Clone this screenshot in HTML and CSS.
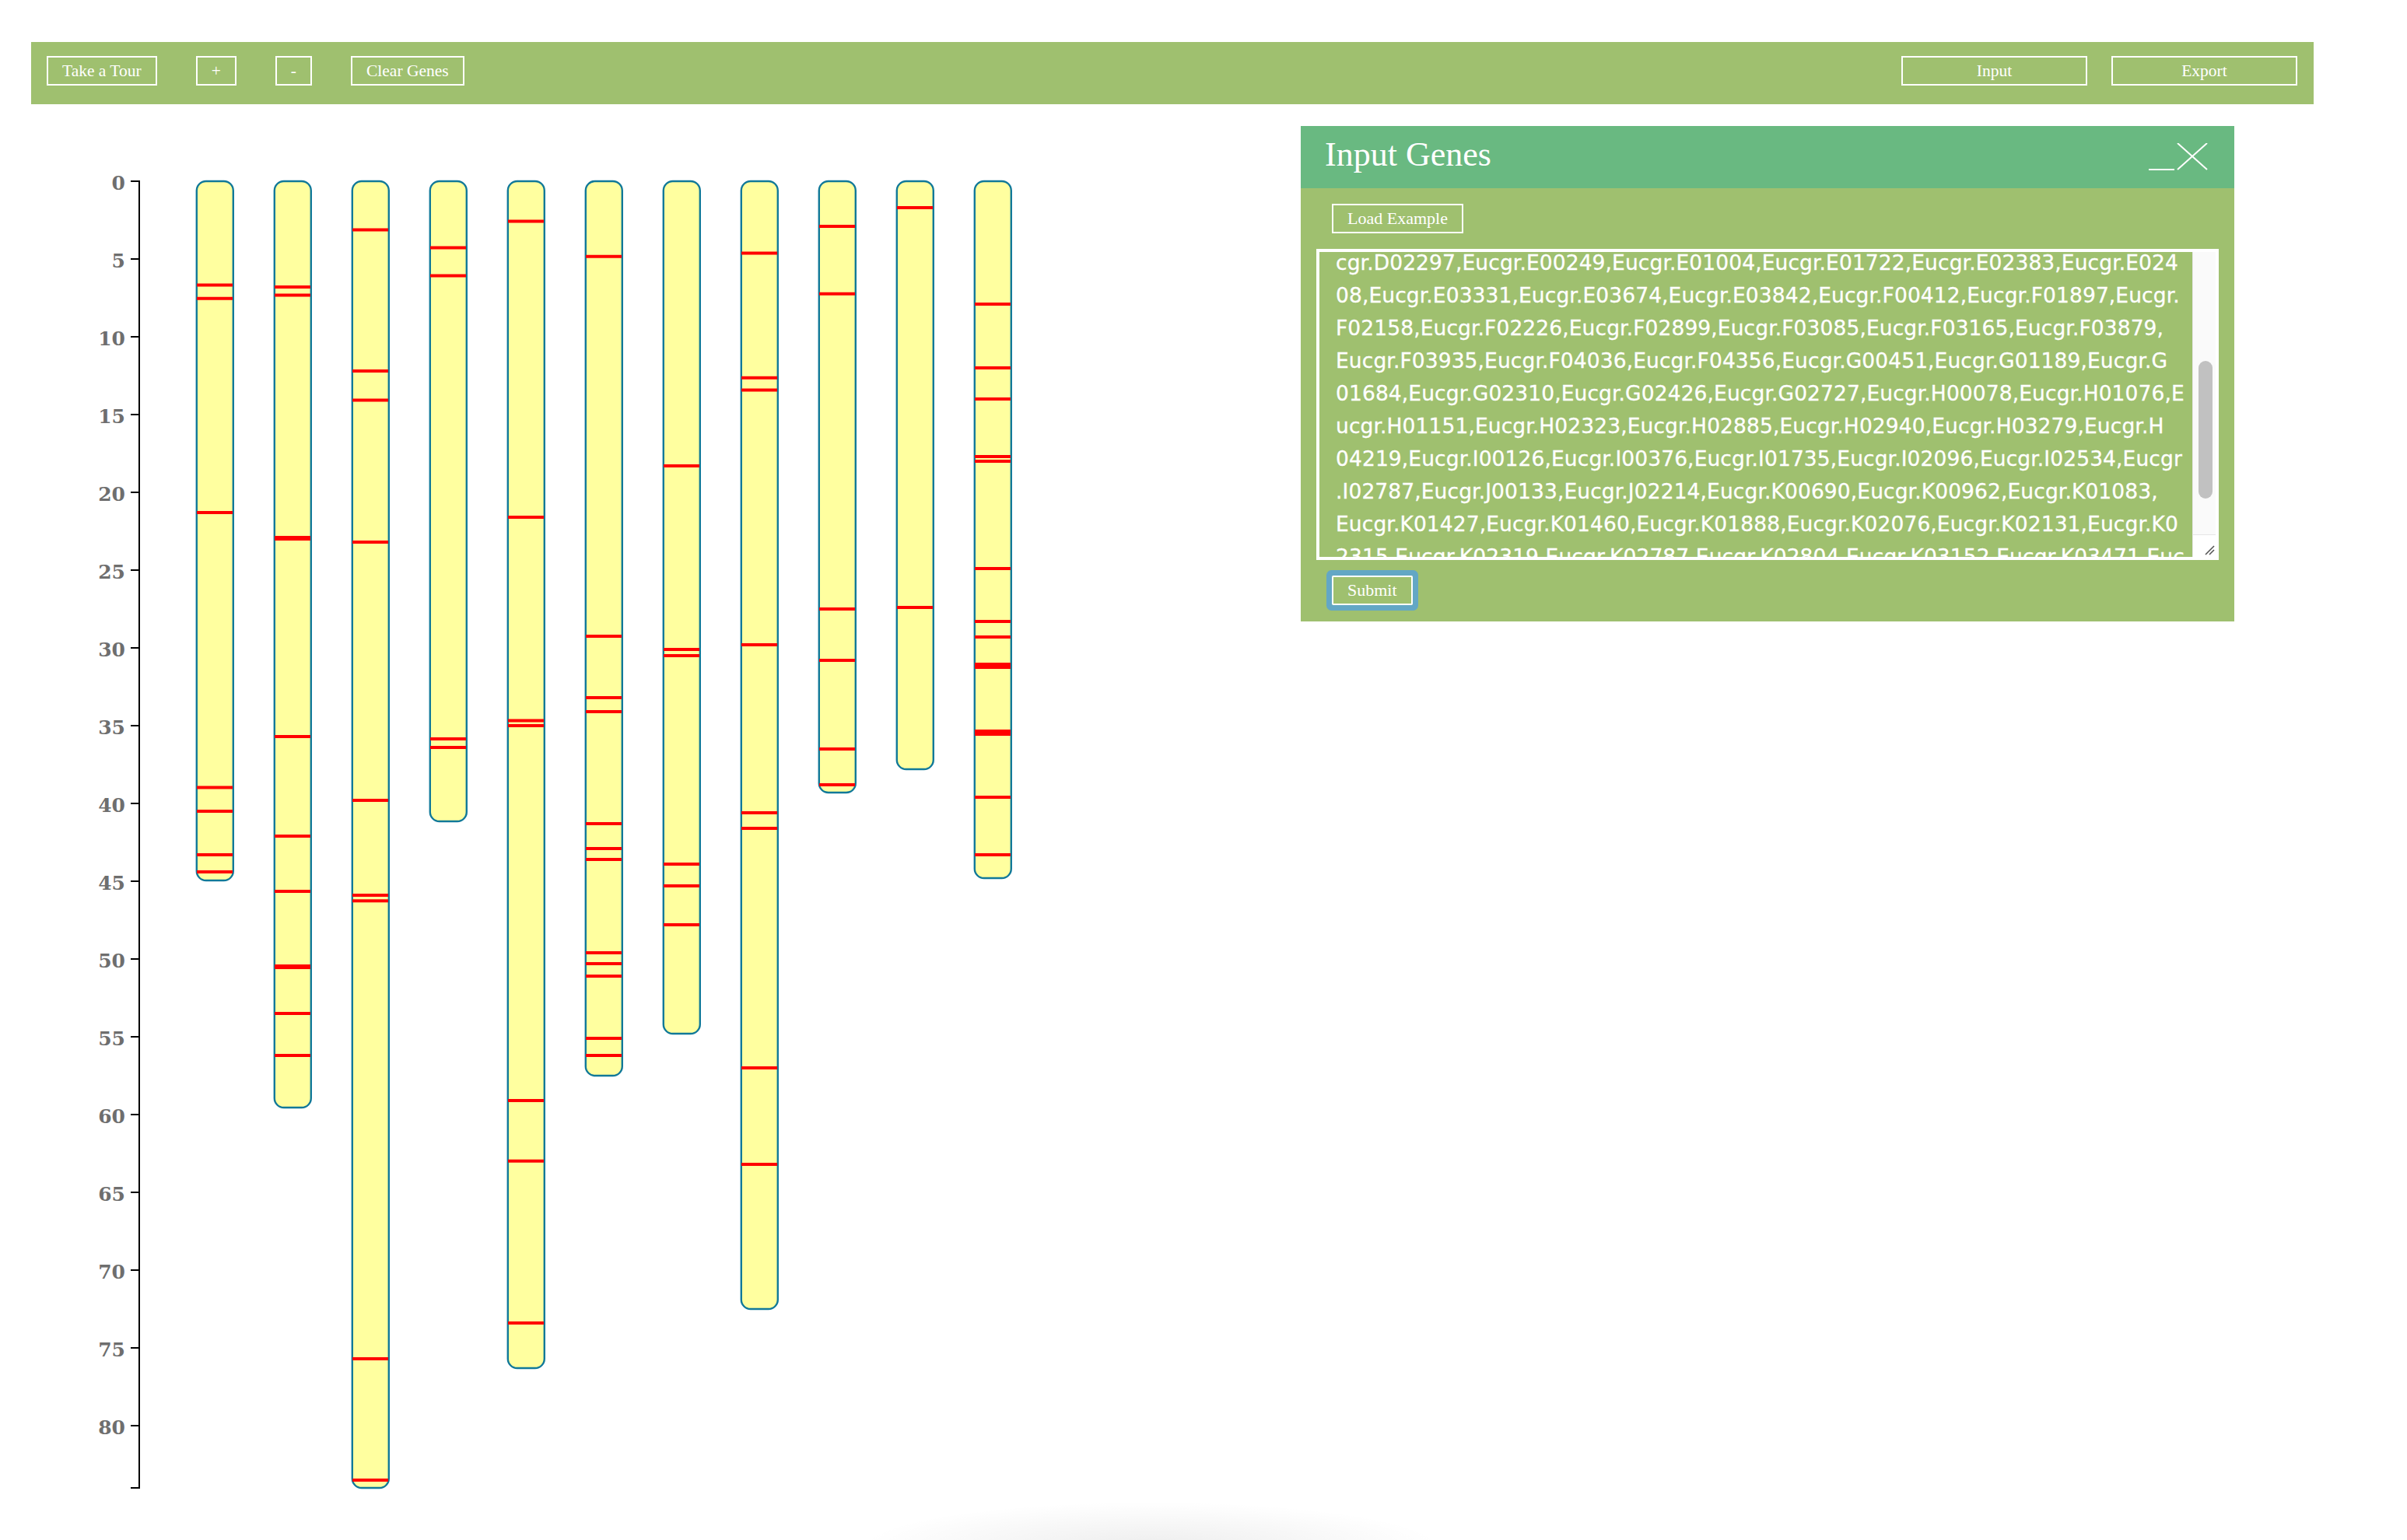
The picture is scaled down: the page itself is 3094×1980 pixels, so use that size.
FILE: index.html
```html
<!DOCTYPE html>
<html lang="en">
<head>
<meta charset="utf-8">
<title>Chromosome Map</title>
<link rel="stylesheet" href="styles.css">
</head>
<body>
<header class="toolbar">
  <div class="toolbar-group">
    <button class="btn">Take a Tour</button>
    <button class="btn">+</button>
    <button class="btn">-</button>
    <button class="btn">Clear Genes</button>
  </div>
  <div class="toolbar-group right">
    <button class="btn wide">Input</button>
    <button class="btn wide">Export</button>
  </div>
</header>

<main class="workspace">
  <svg class="chart" width="1400" height="1840" viewBox="0 0 1400 1840">
    <g transform="translate(179,99)">
      <g class="axis">
        <path d="M-11,0H0V1680H-11" />
        <line x1="-11" y1="100" x2="0" y2="100"/>
        <line x1="-11" y1="200" x2="0" y2="200"/>
        <line x1="-11" y1="300" x2="0" y2="300"/>
        <line x1="-11" y1="400" x2="0" y2="400"/>
        <line x1="-11" y1="500" x2="0" y2="500"/>
        <line x1="-11" y1="600" x2="0" y2="600"/>
        <line x1="-11" y1="700" x2="0" y2="700"/>
        <line x1="-11" y1="800" x2="0" y2="800"/>
        <line x1="-11" y1="900" x2="0" y2="900"/>
        <line x1="-11" y1="1000" x2="0" y2="1000"/>
        <line x1="-11" y1="1100" x2="0" y2="1100"/>
        <line x1="-11" y1="1200" x2="0" y2="1200"/>
        <line x1="-11" y1="1300" x2="0" y2="1300"/>
        <line x1="-11" y1="1400" x2="0" y2="1400"/>
        <line x1="-11" y1="1500" x2="0" y2="1500"/>
        <line x1="-11" y1="1600" x2="0" y2="1600"/>
        <text x="-18" y="0" dy="0.42em">0</text>
        <text x="-18" y="100" dy="0.42em">5</text>
        <text x="-18" y="200" dy="0.42em">10</text>
        <text x="-18" y="300" dy="0.42em">15</text>
        <text x="-18" y="400" dy="0.42em">20</text>
        <text x="-18" y="500" dy="0.42em">25</text>
        <text x="-18" y="600" dy="0.42em">30</text>
        <text x="-18" y="700" dy="0.42em">35</text>
        <text x="-18" y="800" dy="0.42em">40</text>
        <text x="-18" y="900" dy="0.42em">45</text>
        <text x="-18" y="1000" dy="0.42em">50</text>
        <text x="-18" y="1100" dy="0.42em">55</text>
        <text x="-18" y="1200" dy="0.42em">60</text>
        <text x="-18" y="1300" dy="0.42em">65</text>
        <text x="-18" y="1400" dy="0.42em">70</text>
        <text x="-18" y="1500" dy="0.42em">75</text>
        <text x="-18" y="1600" dy="0.42em">80</text>
      </g>

      <g class="chr" transform="translate(73,0)">
        <rect x="0.8" y="0" width="47" height="899" rx="12"/>
        <line x1="1" x2="47" y1="133.6" y2="133.6"/><line x1="1" x2="47" y1="150.8" y2="150.8"/>
        <line x1="1" x2="47" y1="426" y2="426"/><line x1="1" x2="47" y1="779.6" y2="779.6"/>
        <line x1="1" x2="47" y1="810" y2="810"/><line x1="1" x2="47" y1="866" y2="866"/>
        <line x1="1" x2="47" y1="888" y2="888"/>
      </g>
      <g class="chr" transform="translate(173,0)">
        <rect x="0.8" y="0" width="47" height="1191" rx="12"/>
        <line x1="1" x2="47" y1="136" y2="136"/><line x1="1" x2="47" y1="146.6" y2="146.6"/>
        <line x1="1" x2="47" y1="458" y2="458"/><line x1="1" x2="47" y1="460" y2="460"/>
        <line x1="1" x2="47" y1="714" y2="714"/><line x1="1" x2="47" y1="842" y2="842"/>
        <line x1="1" x2="47" y1="913" y2="913"/><line x1="1" x2="47" y1="1009" y2="1009"/>
        <line x1="1" x2="47" y1="1011" y2="1011"/><line x1="1" x2="47" y1="1070" y2="1070"/>
        <line x1="1" x2="47" y1="1124" y2="1124"/>
      </g>
      <g class="chr" transform="translate(273,0)">
        <rect x="0.8" y="0" width="47" height="1680" rx="12"/>
        <line x1="1" x2="47" y1="62.6" y2="62.6"/><line x1="1" x2="47" y1="244" y2="244"/>
        <line x1="1" x2="47" y1="281.6" y2="281.6"/><line x1="1" x2="47" y1="464" y2="464"/>
        <line x1="1" x2="47" y1="796" y2="796"/><line x1="1" x2="47" y1="918" y2="918"/>
        <line x1="1" x2="47" y1="925.2" y2="925.2"/><line x1="1" x2="47" y1="1514" y2="1514"/>
        <line x1="1" x2="47" y1="1670" y2="1670"/>
      </g>
      <g class="chr" transform="translate(373,0)">
        <rect x="0.8" y="0" width="47" height="823" rx="12"/>
        <line x1="1" x2="47" y1="85.6" y2="85.6"/><line x1="1" x2="47" y1="121.4" y2="121.4"/>
        <line x1="1" x2="47" y1="717" y2="717"/><line x1="1" x2="47" y1="728" y2="728"/>
      </g>
      <g class="chr" transform="translate(473,0)">
        <rect x="0.8" y="0" width="47" height="1526" rx="12"/>
        <line x1="1" x2="47" y1="51.6" y2="51.6"/><line x1="1" x2="47" y1="432" y2="432"/>
        <line x1="1" x2="47" y1="693.4" y2="693.4"/><line x1="1" x2="47" y1="700" y2="700"/>
        <line x1="1" x2="47" y1="1182" y2="1182"/><line x1="1" x2="47" y1="1259.8" y2="1259.8"/>
        <line x1="1" x2="47" y1="1468" y2="1468"/>
      </g>
      <g class="chr" transform="translate(573,0)">
        <rect x="0.8" y="0" width="47" height="1150" rx="12"/>
        <line x1="1" x2="47" y1="96.8" y2="96.8"/><line x1="1" x2="47" y1="585" y2="585"/>
        <line x1="1" x2="47" y1="664" y2="664"/><line x1="1" x2="47" y1="682" y2="682"/>
        <line x1="1" x2="47" y1="826" y2="826"/><line x1="1" x2="47" y1="858" y2="858"/>
        <line x1="1" x2="47" y1="872" y2="872"/><line x1="1" x2="47" y1="992" y2="992"/>
        <line x1="1" x2="47" y1="1006" y2="1006"/><line x1="1" x2="47" y1="1022" y2="1022"/>
        <line x1="1" x2="47" y1="1102" y2="1102"/><line x1="1" x2="47" y1="1124" y2="1124"/>
      </g>
      <g class="chr" transform="translate(673,0)">
        <rect x="0.8" y="0" width="47" height="1096" rx="12"/>
        <line x1="1" x2="47" y1="366" y2="366"/><line x1="1" x2="47" y1="602" y2="602"/>
        <line x1="1" x2="47" y1="610" y2="610"/><line x1="1" x2="47" y1="878" y2="878"/>
        <line x1="1" x2="47" y1="906" y2="906"/><line x1="1" x2="47" y1="956" y2="956"/>
      </g>
      <g class="chr" transform="translate(773,0)">
        <rect x="0.8" y="0" width="47" height="1450" rx="12"/>
        <line x1="1" x2="47" y1="92.6" y2="92.6"/><line x1="1" x2="47" y1="252.8" y2="252.8"/>
        <line x1="1" x2="47" y1="268.6" y2="268.6"/><line x1="1" x2="47" y1="596" y2="596"/>
        <line x1="1" x2="47" y1="812" y2="812"/><line x1="1" x2="47" y1="832" y2="832"/>
        <line x1="1" x2="47" y1="1140" y2="1140"/><line x1="1" x2="47" y1="1264" y2="1264"/>
      </g>
      <g class="chr" transform="translate(873,0)">
        <rect x="0.8" y="0" width="47" height="786" rx="12"/>
        <line x1="1" x2="47" y1="58" y2="58"/><line x1="1" x2="47" y1="144.8" y2="144.8"/>
        <line x1="1" x2="47" y1="550" y2="550"/><line x1="1" x2="47" y1="616" y2="616"/>
        <line x1="1" x2="47" y1="730" y2="730"/><line x1="1" x2="47" y1="776" y2="776"/>
      </g>
      <g class="chr" transform="translate(973,0)">
        <rect x="0.8" y="0" width="47" height="756" rx="12"/>
        <line x1="1" x2="47" y1="34" y2="34"/><line x1="1" x2="47" y1="548" y2="548"/>
      </g>
      <g class="chr" transform="translate(1073,0)">
        <rect x="0.8" y="0" width="47" height="896" rx="12"/>
        <line x1="1" x2="47" y1="158" y2="158"/><line x1="1" x2="47" y1="240" y2="240"/>
        <line x1="1" x2="47" y1="280" y2="280"/><line x1="1" x2="47" y1="354" y2="354"/>
        <line x1="1" x2="47" y1="360" y2="360"/><line x1="1" x2="47" y1="498" y2="498"/>
        <line x1="1" x2="47" y1="566" y2="566"/><line x1="1" x2="47" y1="586" y2="586"/>
        <line x1="1" x2="47" y1="621" y2="621"/><line x1="1" x2="47" y1="625" y2="625"/>
        <line x1="1" x2="47" y1="707" y2="707"/><line x1="1" x2="47" y1="711" y2="711"/>
        <line x1="1" x2="47" y1="792" y2="792"/><line x1="1" x2="47" y1="866" y2="866"/>
      </g>
    </g>
  </svg>
</main>

<section class="dialog">
  <div class="dialog-header">
    <h2 class="dialog-title">Input Genes</h2>
    <svg class="dialog-controls" width="76" height="36" viewBox="0 0 76 36">
      <line x1="0" y1="34" x2="33" y2="34"/>
      <line x1="37" y1="0" x2="75" y2="34"/>
      <line x1="75" y1="0" x2="37" y2="34"/>
    </svg>
  </div>
  <div class="dialog-body">
    <button class="btn dialog-btn">Load Example</button>
    <div class="gene-box">
      <div class="gene-scroll">
        <div class="gene-text">cgr.D02297,Eucgr.E00249,Eucgr.E01004,Eucgr.E01722,Eucgr.E02383,Eucgr.E024
08,Eucgr.E03331,Eucgr.E03674,Eucgr.E03842,Eucgr.F00412,Eucgr.F01897,Eucgr.
F02158,Eucgr.F02226,Eucgr.F02899,Eucgr.F03085,Eucgr.F03165,Eucgr.F03879,
Eucgr.F03935,Eucgr.F04036,Eucgr.F04356,Eucgr.G00451,Eucgr.G01189,Eucgr.G
01684,Eucgr.G02310,Eucgr.G02426,Eucgr.G02727,Eucgr.H00078,Eucgr.H01076,E
ucgr.H01151,Eucgr.H02323,Eucgr.H02885,Eucgr.H02940,Eucgr.H03279,Eucgr.H
04219,Eucgr.I00126,Eucgr.I00376,Eucgr.I01735,Eucgr.I02096,Eucgr.I02534,Eucgr
.I02787,Eucgr.J00133,Eucgr.J02214,Eucgr.K00690,Eucgr.K00962,Eucgr.K01083,
Eucgr.K01427,Eucgr.K01460,Eucgr.K01888,Eucgr.K02076,Eucgr.K02131,Eucgr.K0
2315,Eucgr.K02319,Eucgr.K02787,Eucgr.K02804,Eucgr.K03152,Eucgr.K03471,Euc</div>
      </div>
      <div class="scrollbar">
        <div class="scroll-track"><div class="scroll-thumb"></div></div>
        <div class="scroll-corner">
          <svg width="14" height="14" viewBox="0 0 14 14">
            <line x1="2" y1="13" x2="13" y2="2"/>
            <line x1="7" y1="13" x2="13" y2="7"/>
          </svg>
        </div>
      </div>
    </div>
    <button class="btn dialog-btn submit">Submit</button>
  </div>
</section>

<div class="bottom-glow"></div>
</body>
</html>
```

FILE: styles.css
```css
* {
  box-sizing: border-box;
}

html,
body {
  margin: 0;
  padding: 0;
  background: #ffffff;
}

body {
  position: relative;
  width: 3094px;
  height: 1980px;
  overflow: hidden;
  font-family: "Liberation Serif", "Times New Roman", serif;
}

/* ---------- top toolbar ---------- */
.toolbar {
  display: flex;
  justify-content: space-between;
  align-items: flex-start;
  width: 2934px;
  height: 80px;
  margin: 54px 0 0 40px;
  padding: 18px 21px 0 20px;
  background: #9fc06f;
}

.toolbar-group {
  display: flex;
  gap: 50px;
}

.toolbar-group.right {
  gap: 31px;
}

.btn {
  display: block;
  height: 38px;
  margin: 0;
  padding: 0 18px;
  border: 2px solid #ffffff;
  border-radius: 0;
  background: transparent;
  color: #ffffff;
  font-family: "Liberation Serif", "Times New Roman", serif;
  font-size: 21.5px;
  line-height: 34px;
  cursor: pointer;
}

.btn.wide {
  width: 239px;
  padding: 0;
}

/* ---------- chromosome chart ---------- */
.workspace {
  display: block;
}

.chart {
  display: block;
}

.axis path,
.axis line {
  fill: none;
  stroke: #000000;
  stroke-width: 2;
}

.axis text {
  font-family: "DejaVu Serif", "Liberation Serif", serif;
  font-size: 25px;
  font-weight: bold;
  fill: #6e6e6e;
  text-anchor: end;
}

.chr rect {
  fill: #ffff9f;
  stroke: #117999;
  stroke-width: 2.4;
}

.chr line {
  stroke: #ff0000;
  stroke-width: 4;
}

/* ---------- input dialog ---------- */
.dialog {
  position: absolute;
  left: 1672px;
  top: 162px;
  width: 1200px;
}

.dialog-header {
  display: flex;
  align-items: center;
  justify-content: space-between;
  height: 80px;
  padding: 0 34px 6px 31px;
  background: #69b981;
  color: #ffffff;
}

.dialog-title {
  margin: 0;
  font-family: "Liberation Serif", "Times New Roman", serif;
  font-size: 44px;
  font-weight: normal;
  line-height: 44px;
}

.dialog-controls {
  display: block;
  margin-top: 6px;
}

.dialog-controls line {
  stroke: #ffffff;
  stroke-width: 2;
}

.dialog-body {
  display: flex;
  flex-direction: column;
  align-items: flex-start;
  padding: 20px 20px 21px;
  background: #9fc06f;
}

.dialog-btn {
  margin-left: 20px;
  font-size: 22px;
}

.gene-box {
  display: flex;
  align-self: stretch;
  height: 400px;
  margin-top: 20px;
  border: 4px solid #ffffff;
  background: #9fc06f;
}

.gene-scroll {
  flex: 1;
  overflow: hidden;
}

.gene-text {
  margin-top: -7px;
  padding-left: 21px;
  color: #ffffff;
  font-family: "DejaVu Sans", "Verdana", sans-serif;
  font-size: 26.5px;
  letter-spacing: 0.1px;
  line-height: 42px;
  white-space: pre;
  -webkit-text-stroke: 0.3px #ffffff;
}

.scrollbar {
  display: flex;
  flex-direction: column;
  width: 30px;
  background: #fafafa;
  border-left: 1px solid #e6e6e6;
}

.scroll-track {
  flex: 1;
  padding: 140px 0 0 7px;
}

.scroll-thumb {
  width: 18px;
  height: 177px;
  border-radius: 9px;
  background: #c1c1c1;
}

.scroll-corner {
  display: flex;
  align-items: flex-end;
  justify-content: flex-end;
  height: 29px;
  padding: 0 1px 2px 0;
  border-top: 1px solid #e6e6e6;
  background: #ffffff;
}

.scroll-corner svg {
  display: block;
}

.scroll-corner line {
  stroke: #555555;
  stroke-width: 1.6;
}

.submit {
  margin-top: 20px;
  border-radius: 2px;
  box-shadow: 0 0 0 7px #63a7c5;
}

/* faint shadow at the bottom edge */
.bottom-glow {
  position: absolute;
  left: 1100px;
  top: 1930px;
  width: 760px;
  height: 60px;
  background: radial-gradient(ellipse at 50% 100%, rgba(0, 0, 0, 0.07), rgba(0, 0, 0, 0) 70%);
}
```
